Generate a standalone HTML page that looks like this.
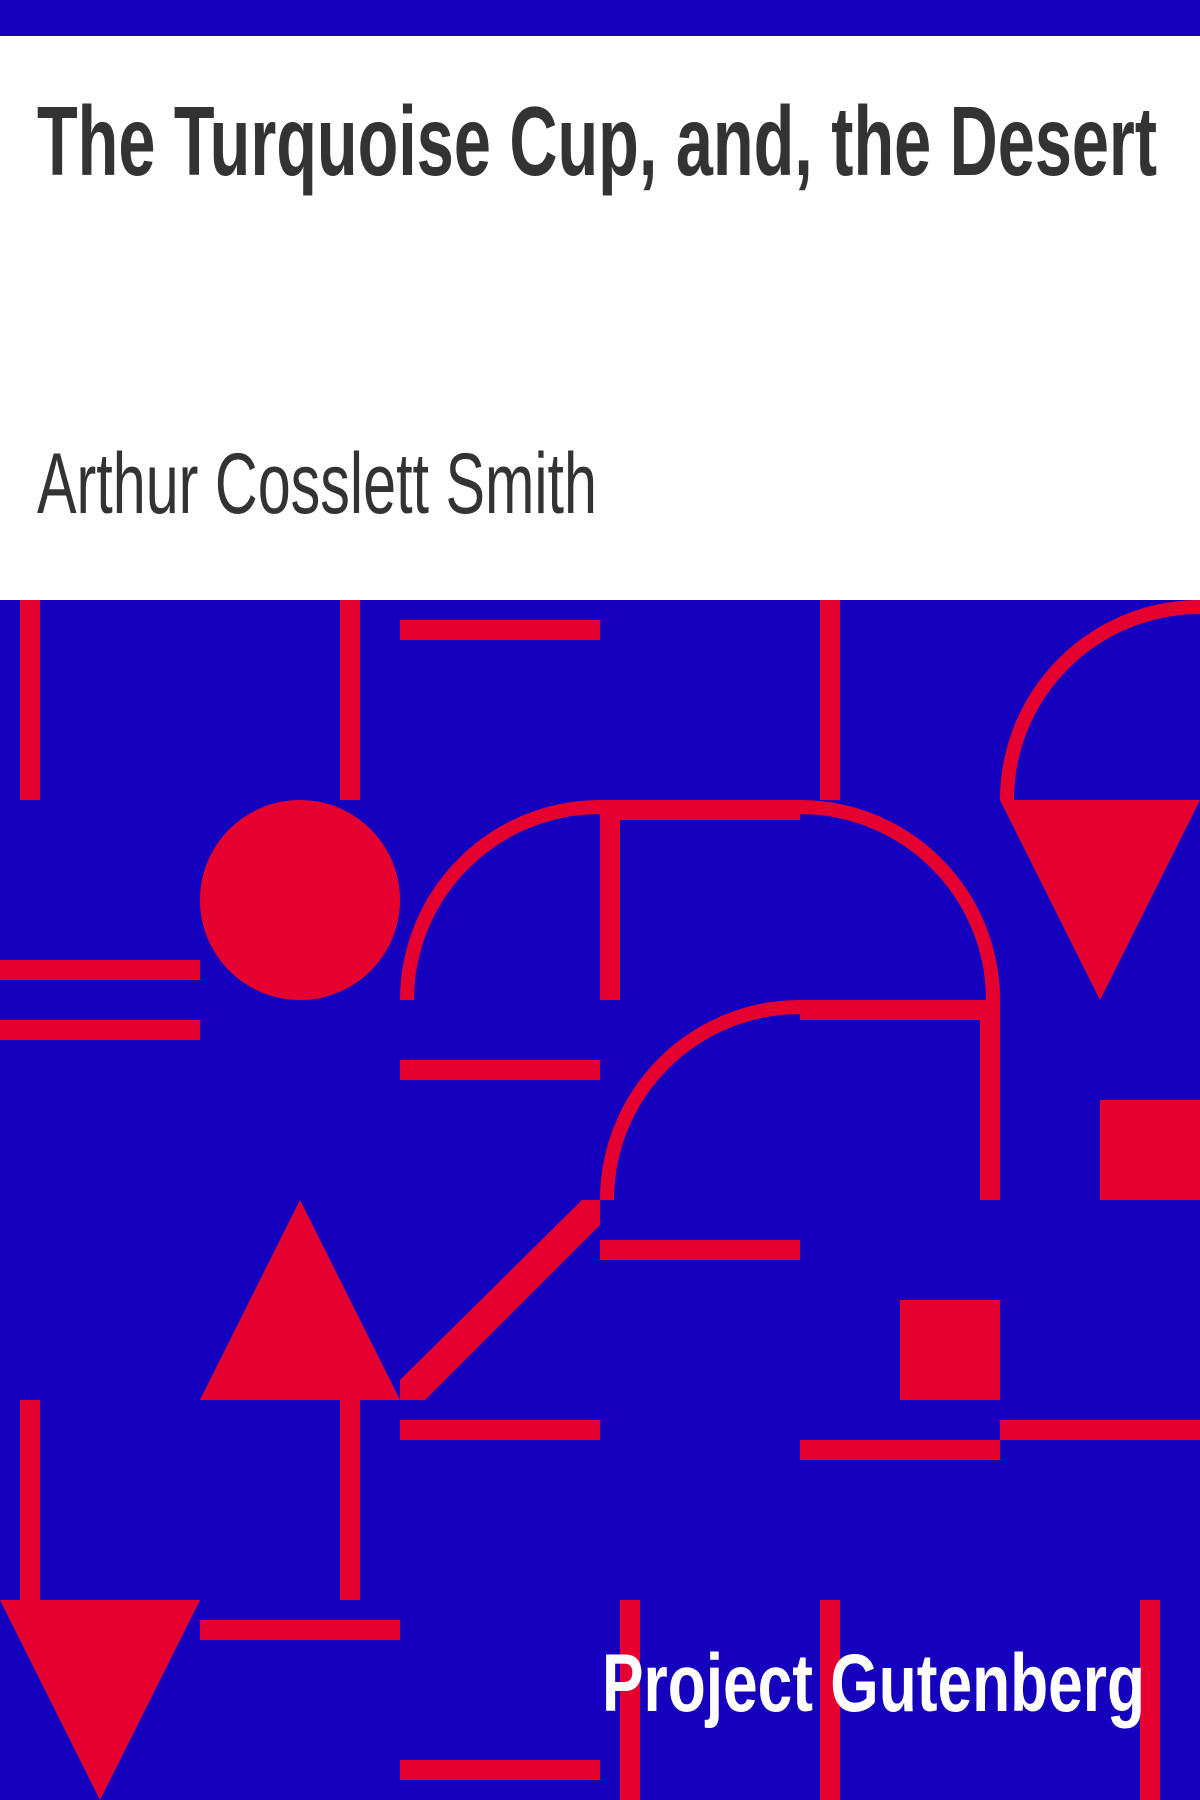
<!DOCTYPE html>
<html><head><meta charset="utf-8"><style>
html,body{margin:0;padding:0;background:#fff}
svg{display:block}
</style></head><body>
<svg width="1200" height="1800" viewBox="0 0 1200 1800" xmlns="http://www.w3.org/2000/svg">
<rect x="0" y="0" width="1200" height="36" fill="#1500bd"/>
<text x="37" y="175" font-family="Liberation Sans, sans-serif" font-weight="bold" font-size="98" fill="#333" textLength="1120" lengthAdjust="spacingAndGlyphs">The Turquoise Cup, and, the Desert</text>
<text x="37" y="513" font-family="Liberation Sans, sans-serif" font-size="86" fill="#333" textLength="560" lengthAdjust="spacingAndGlyphs">Arthur Cosslett Smith</text>
<rect x="0" y="600" width="1200" height="1200" fill="#1500bd"/>
<g fill="#e6002f">
<rect x="20" y="600" width="20" height="200"/>
<rect x="340" y="600" width="20" height="200"/>
<rect x="400" y="620" width="200" height="20"/>
<rect x="820" y="600" width="20" height="200"/>
<polygon points="1000,800 1200,800 1100,1000"/>
<circle cx="300" cy="900" r="100"/>
<rect x="0" y="960" width="200" height="20"/>
<rect x="0" y="1020" width="200" height="20"/>
<rect x="600" y="800" width="200" height="20"/>
<rect x="600" y="800" width="20" height="200"/>
<rect x="980" y="1000" width="20" height="200"/>
<rect x="400" y="1060" width="200" height="20"/>
<rect x="800" y="1000" width="200" height="20"/>
<rect x="1100" y="1100" width="100" height="100"/>
<rect x="600" y="1240" width="200" height="20"/>
<polygon points="600,1200 600,1225 425,1400 400,1400 400,1380 582,1200"/>
<polygon points="300,1200 400,1400 200,1400"/>
<rect x="900" y="1300" width="100" height="100"/>
<rect x="400" y="1420" width="200" height="20"/>
<rect x="800" y="1440" width="200" height="20"/>
<rect x="1000" y="1420" width="200" height="20"/>
<rect x="20" y="1400" width="20" height="200"/>
<rect x="340" y="1400" width="20" height="200"/>
<polygon points="0,1600 200,1600 100,1800"/>
<rect x="200" y="1620" width="200" height="20"/>
<rect x="400" y="1760" width="200" height="20"/>
<rect x="620" y="1600" width="20" height="200"/>
<rect x="820" y="1600" width="20" height="200"/>
<rect x="1140" y="1600" width="20" height="200"/>
</g>
<g fill="none" stroke="#e6002f" stroke-width="14">
<path d="M1007 800 A193 193 0 0 1 1200 607"/>
<path d="M407 1000 A193 193 0 0 1 600 807"/>
<path d="M800 807 A193 193 0 0 1 993 1000"/>
<path d="M607 1200 A193 193 0 0 1 800 1007"/>
</g>
<text x="602" y="1711" font-family="Liberation Sans, sans-serif" font-weight="bold" font-size="82" fill="#fff" textLength="543" lengthAdjust="spacingAndGlyphs">Project Gutenberg</text>
</svg>
</body></html>
